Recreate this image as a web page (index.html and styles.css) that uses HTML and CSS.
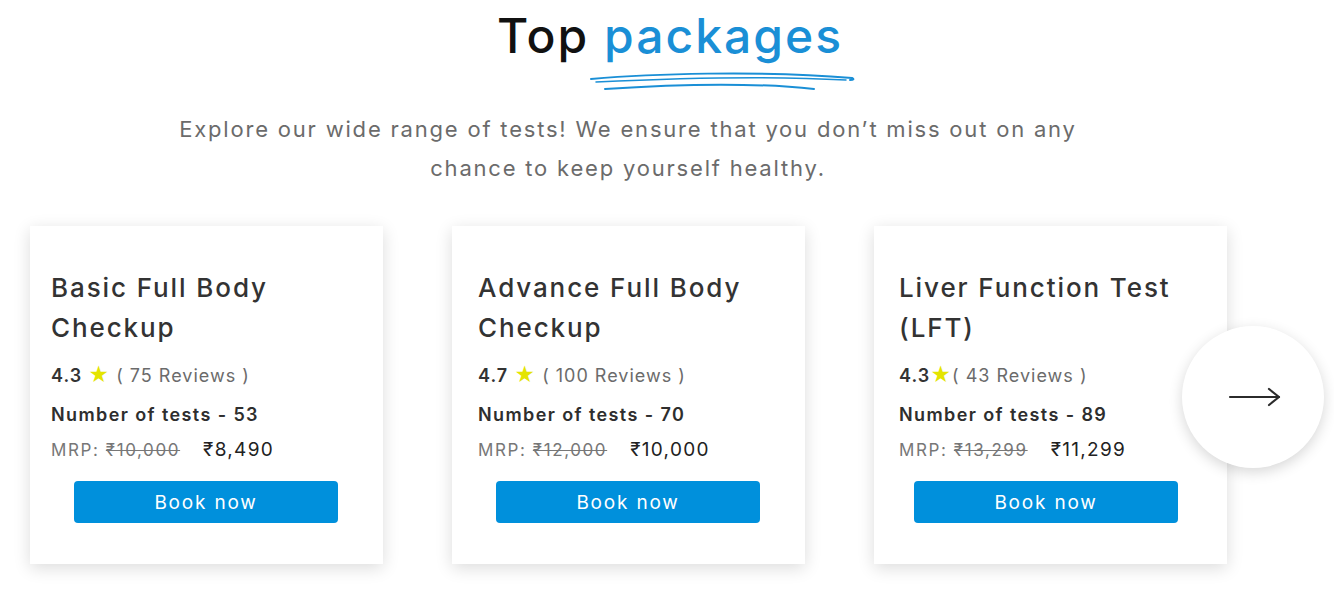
FILE: index.html
```html
<!DOCTYPE html>
<html lang="en">
<head>
<meta charset="utf-8">
<title>Top packages</title>
<link rel="stylesheet" href="styles.css">
</head>
<body>
<section class="packages">
  <header class="head">
    <h1 class="title">Top <span class="accent">packages</span></h1>
    <svg class="scribble" width="270" height="30" viewBox="0 0 270 30" fill="none" stroke="#1a8fd6" stroke-linecap="round">
      <path d="M3 13 C 60 8, 170 4, 264 12 C 266 13, 266 14, 262 14" stroke-width="2"/>
      <path d="M8 16 C 90 12, 190 10, 258 14" stroke-width="1.5"/>
      <path d="M17 23 C 90 18, 170 17, 226 23" stroke-width="2"/>
    </svg>
    <p class="lead">Explore our wide range of tests! We ensure that you don’t miss out on any chance to keep yourself healthy.</p>
  </header>
  <div class="row">
    <article class="card c1">
      <h2 class="name">Basic Full Body Checkup</h2>
      <div class="rating"><b>4.3</b> <span class="star">★</span> <span class="reviews">( 75 Reviews )</span></div>
      <div class="count">Number of tests - 53</div>
      <div class="price"><span class="mrp">MRP: <s>₹10,000</s></span><span class="now">₹8,490</span></div>
      <button class="book">Book now</button>
    </article>
    <article class="card c2">
      <h2 class="name">Advance Full Body Checkup</h2>
      <div class="rating"><b>4.7</b> <span class="star">★</span> <span class="reviews">( 100 Reviews )</span></div>
      <div class="count">Number of tests - 70</div>
      <div class="price"><span class="mrp">MRP: <s>₹12,000</s></span><span class="now">₹10,000</span></div>
      <button class="book">Book now</button>
    </article>
    <article class="card c3">
      <h2 class="name">Liver Function Test (LFT)</h2>
      <div class="rating"><b>4.3</b><span class="star">★</span><span class="reviews">( 43 Reviews )</span></div>
      <div class="count">Number of tests - 89</div>
      <div class="price"><span class="mrp">MRP: <s>₹13,299</s></span><span class="now">₹11,299</span></div>
      <button class="book">Book now</button>
    </article>
    <button class="next" aria-label="Next">
      <svg width="54" height="24" viewBox="0 0 54 24" fill="none" stroke="#2b2b2b" stroke-width="2.2" stroke-linecap="round" stroke-linejoin="round">
        <path d="M2 12 H51"/>
        <path d="M41 4 L51 12 L41 20"/>
      </svg>
    </button>
  </div>
</section>
</body>
</html>
```

FILE: styles.css
```css
* { box-sizing: border-box; }
html, body { margin: 0; padding: 0; background: #fff; }
body {
  font-family: Inter, "Noto Sans", sans-serif;
  color: #2e2e2e;
  width: 1334px;
  height: 598px;
  overflow: hidden;
}
.packages { display: flex; flex-direction: column; align-items: center; }
.head { display: flex; flex-direction: column; align-items: center; padding-top: 9px; }
.title {
  margin: 0;
  font-size: 48px;
  font-weight: 500;
  line-height: 54px;
  color: #111;
  letter-spacing: 2px;
  transform: translateX(3px);
}
.accent { color: #1a8fd6; }
.scribble { display: block; margin: 3px 0 0 112px; }
.lead {
  margin: 14px 78px 0 0;
  width: 940px;
  text-align: center;
  font-size: 22px;
  line-height: 39px;
  color: #6b6b6b;
  letter-spacing: 1.8px;
}
.row {
  align-self: stretch;
  display: flex;
  align-items: center;
  padding-left: 30px;
  margin-top: 38px;
  position: relative;
}
.card {
  width: 353px;
  height: 338px;
  background: #fff;
  box-shadow: 0 4px 16px rgba(0,0,0,0.14);
  padding: 42px 16px 0 21px;
  display: flex;
  flex-direction: column;
  margin-right: 69px;
}
.c2 { padding-left: 26px; }
.c3 { padding-left: 25px; margin-right: 0; }
.name {
  margin: 0;
  font-size: 26px;
  font-weight: 520;
  line-height: 40px;
  color: #333;
  min-height: 80px;
  max-width: 300px;
  letter-spacing: 1.9px;
}
.rating { margin-top: 15px; font-size: 18px; line-height: 24px; color: #333; letter-spacing: 1px; }
.rating b { font-weight: 600; }
.star { color: #e4e400; font-size: 20px; }
.reviews { color: #6b6b6b; }
.count { margin-top: 15px; font-size: 18px; font-weight: 600; line-height: 24px; color: #2e2e2e; letter-spacing: 1.4px; }
.price { margin-top: 11px; font-size: 18px; line-height: 24px; display: flex; gap: 23px; }
.mrp { color: #777; font-size: 17px; letter-spacing: 1.6px; }
.mrp s { color: #777; }
.now { color: #222; font-size: 19px; letter-spacing: 1.3px; }
.book {
  margin-top: 19px;
  align-self: flex-start;
  margin-left: 23px;
  width: 264px;
  height: 42px;
  border: 0;
  border-radius: 4px;
  background: #0090dc;
  color: #fff;
  font-family: inherit;
  font-size: 19px;
  letter-spacing: 1.8px;
  cursor: pointer;
}
.c2 .book { margin-left: 18px; }
.c3 .book { margin-left: 15px; }
.next {
  position: absolute;
  left: 1182px;
  top: 100px;
  width: 142px;
  height: 142px;
  border-radius: 50%;
  border: 0;
  background: #fff;
  box-shadow: 0 4px 14px rgba(0,0,0,0.16);
  display: flex;
  align-items: center;
  justify-content: center;
  padding: 0 0 0 4px;
}
```
